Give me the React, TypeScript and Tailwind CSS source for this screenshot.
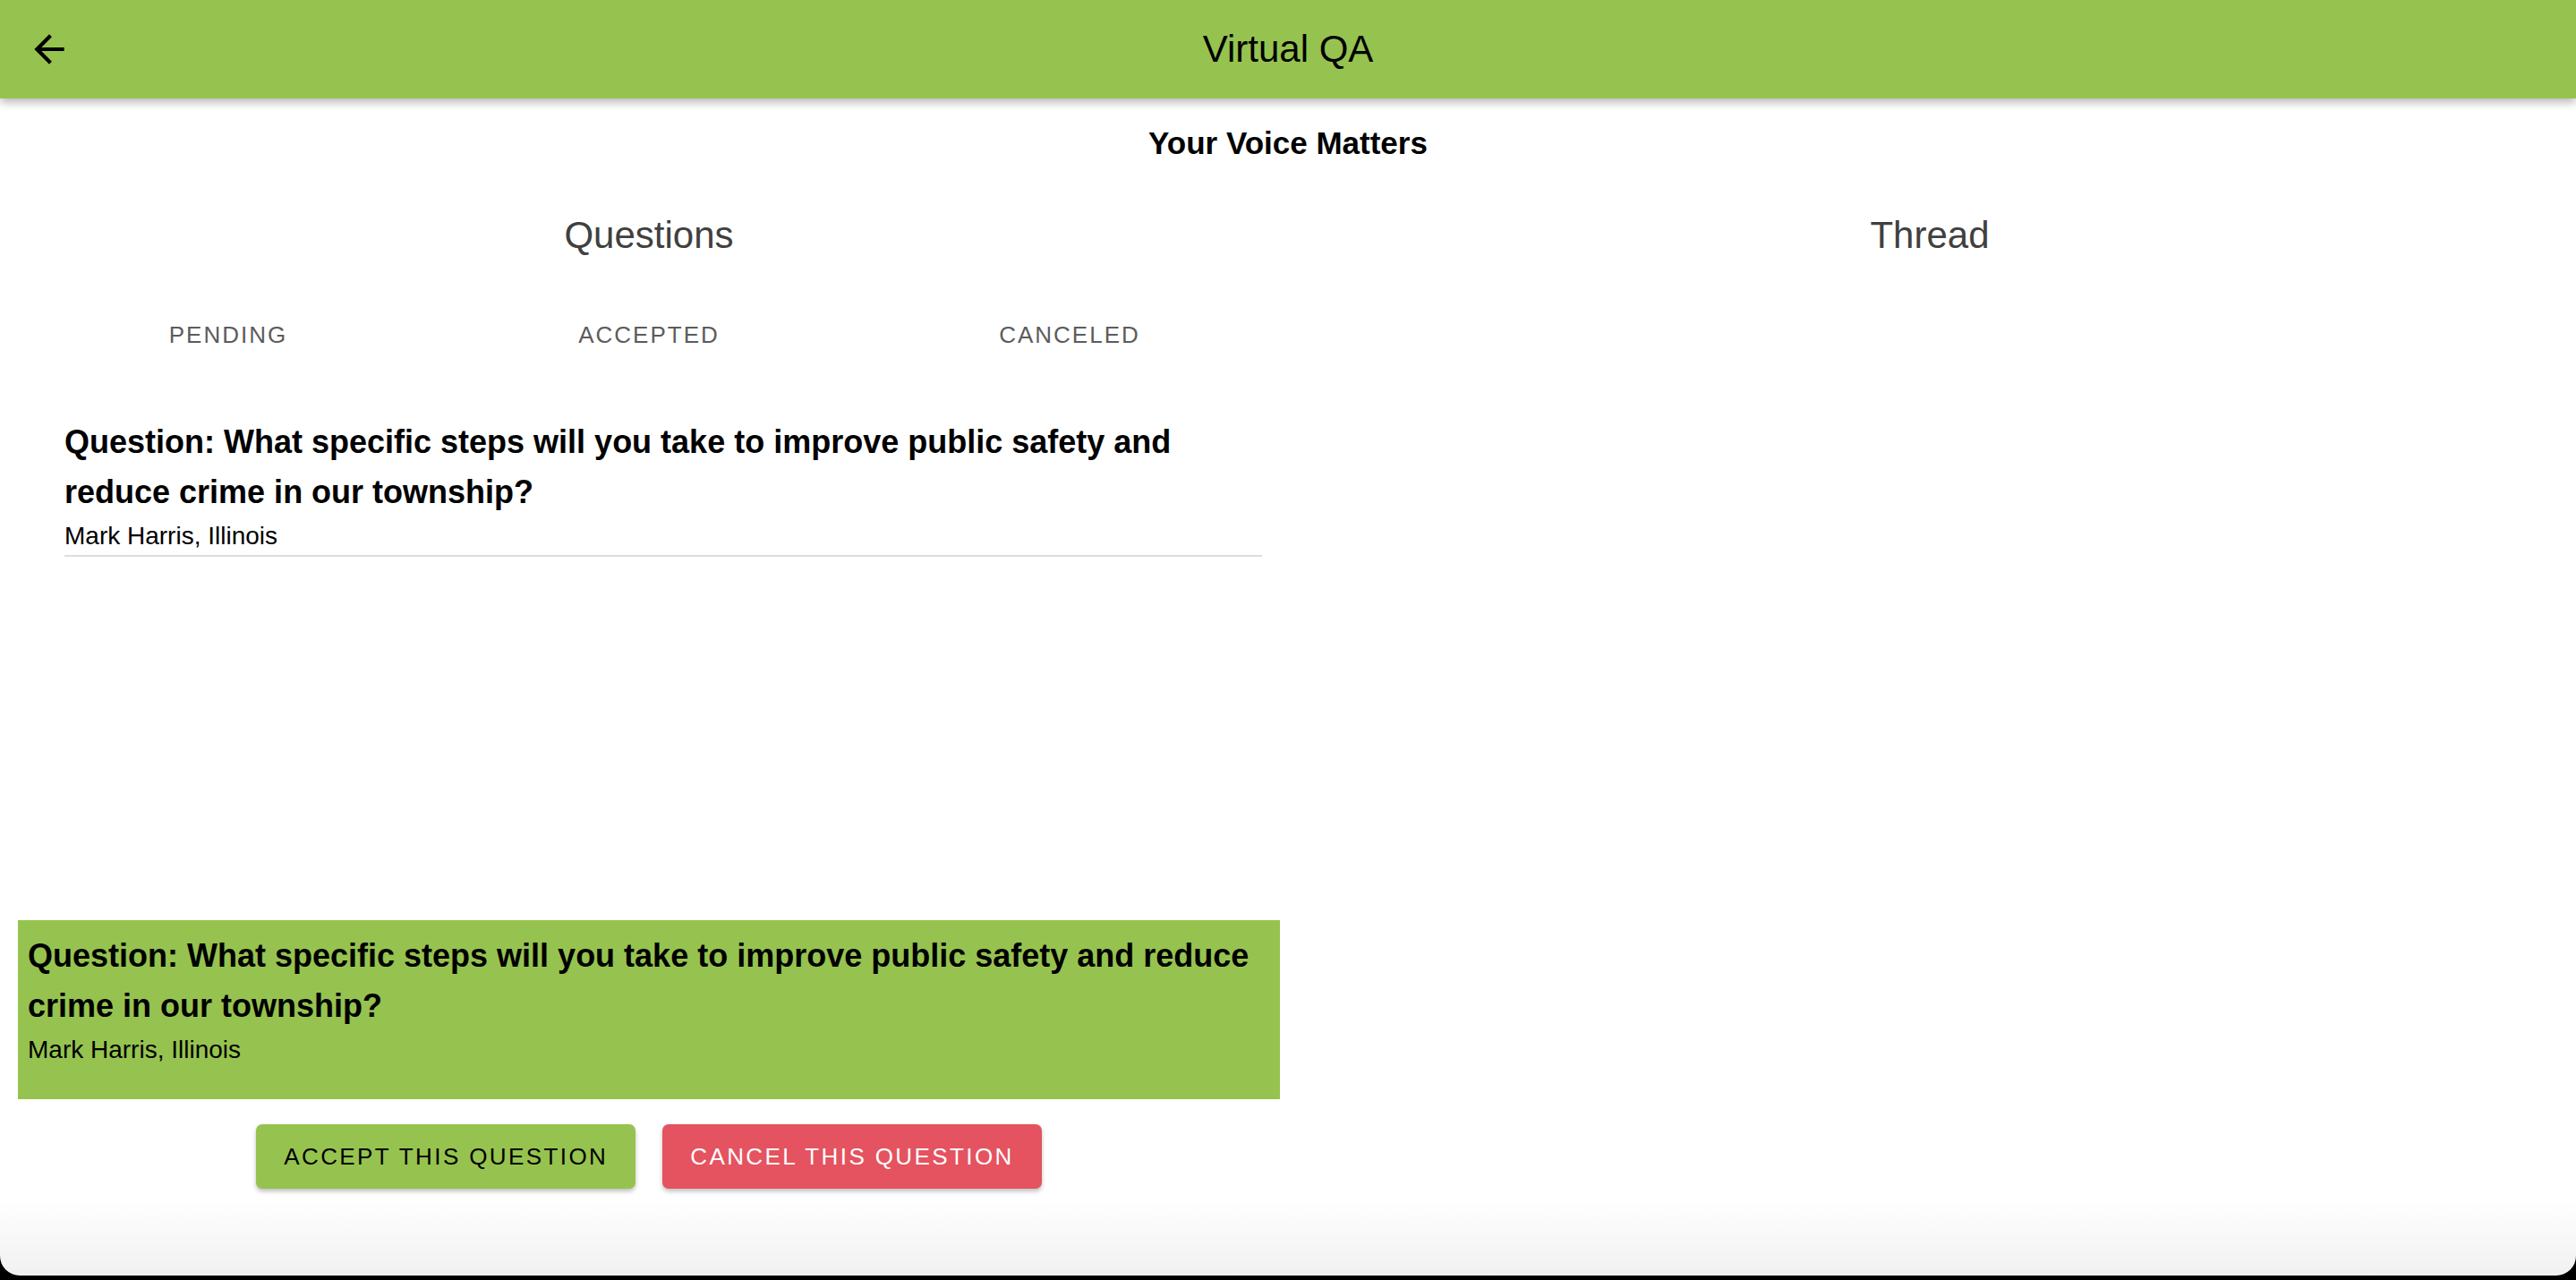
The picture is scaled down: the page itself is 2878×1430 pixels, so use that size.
import { useState } from 'react'

const TABS = ['PENDING', 'ACCEPTED', 'CANCELED']

const QUESTIONS = [
  {
    id: 1,
    text: 'What specific steps will you take to improve public safety and reduce crime in our township?',
    author: 'Mark Harris',
    state: 'Illinois',
  },
]

function ArrowBack() {
  return (
    <svg viewBox="0 0 24 24" className="w-[50px] h-[50px]" fill="currentColor">
      <path d="M20 11H7.83l5.59-5.59L12 4l-8 8 8 8 1.41-1.41L7.83 13H20v-2z" />
    </svg>
  )
}

export default function App() {
  const [tab, setTab] = useState('PENDING')
  const [selected] = useState(QUESTIONS[0])

  return (
    <div className="h-[1430px] w-full bg-black overflow-hidden font-['Liberation_Sans',Arial,sans-serif]">
      <div className="h-[1425px] bg-[linear-gradient(180deg,#ffffff_94%,#f1f1f1_100%)] rounded-b-[22px] overflow-hidden">
        {/* header */}
        <div className="relative z-10 h-[110px] bg-[#96c34f] flex items-center px-[30px] shadow-[0_4px_10px_rgba(0,0,0,0.3)]">
          <button className="text-black">
            <ArrowBack />
          </button>
          <h1 className="absolute left-0 right-0 text-center text-[42px] leading-[50px] text-black pointer-events-none">
            Virtual QA
          </h1>
        </div>

        <h2 className="mt-[29px] text-center text-[35px] leading-[42px] font-bold text-black">Your Voice Matters</h2>

        <div className="mt-[57px] grid grid-cols-[1450px_1fr]">
          {/* questions column */}
          <div className="px-[20px] flex flex-col">
            <h3 className="text-center text-[42px] leading-[50px] text-[#404040]">Questions</h3>

            <div className="mt-[42px] h-[88px] grid grid-cols-3">
              {TABS.map(t => (
                <button
                  key={t}
                  onClick={() => setTab(t)}
                  className="flex items-center justify-center text-[26px] tracking-[2px] font-medium text-[#5c5c5c]"
                >
                  {t}
                </button>
              ))}
            </div>

            <div className="mt-[48px] h-[562px]">
              {QUESTIONS.map(q => (
                <div key={q.id} className="ml-[52px] mr-[20px] border-b-2 border-[#dddddd]">
                  <p className="text-[36px] leading-[56px] font-bold text-black">Question: {q.text}</p>
                  <p className="text-[28px] leading-[42px] text-black">
                    {q.author}, {q.state}
                  </p>
                </div>
              ))}
            </div>

            {/* selected question */}
            <div className="bg-[#96c34f] pt-[12px] pb-[34px] px-[11px]">
              <p className="text-[36px] leading-[56px] font-bold text-black">Question: {selected.text}</p>
              <p className="text-[28px] leading-[42px] text-black">
                {selected.author}, {selected.state}
              </p>
            </div>

            <div className="mt-[28px] flex justify-center gap-[30px]">
              <button className="h-[72px] px-[31px] rounded-[7px] bg-[#96c34f] text-black text-[26px] tracking-[2.4px] font-medium shadow-[0_3px_5px_rgba(0,0,0,0.25)]">
                ACCEPT THIS QUESTION
              </button>
              <button className="h-[72px] px-[31px] rounded-[7px] bg-[#e4535f] text-white text-[26px] tracking-[2.4px] font-medium shadow-[0_3px_5px_rgba(0,0,0,0.25)]">
                CANCEL THIS QUESTION
              </button>
            </div>
          </div>

          {/* thread column */}
          <div className="pr-[16px]">
            <h3 className="text-center text-[42px] leading-[50px] text-[#404040]">Thread</h3>
          </div>
        </div>
      </div>
    </div>
  )
}
